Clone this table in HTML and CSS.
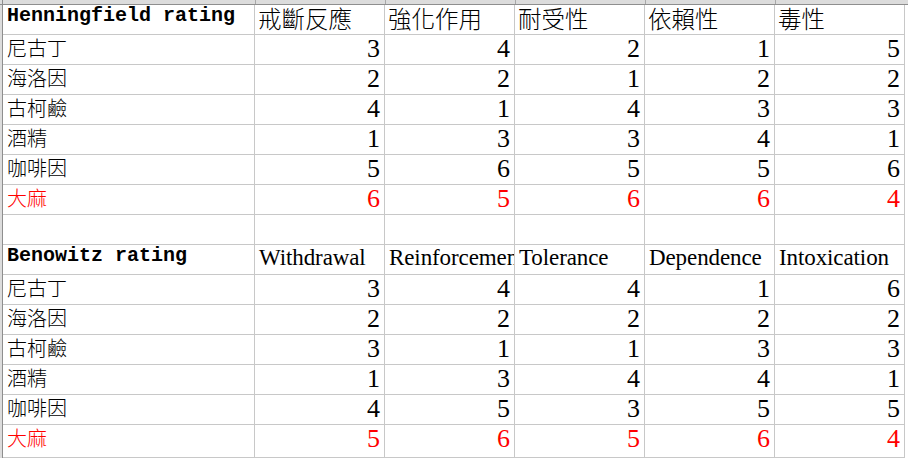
FILE: index.html
```html
<!DOCTYPE html>
<html lang="zh-Hant">
<head>
<meta charset="utf-8">
<title>Henningfield / Benowitz rating</title>
<link rel="stylesheet" href="styles.css">
</head>
<body>
<div class="sheet">
  <div class="colhead">
    <span class="ch c1"></span><span class="ch"></span><span class="ch"></span><span class="ch"></span><span class="ch"></span><span class="ch"></span><span class="ch last"></span>
  </div>
  <div class="body">
    <div class="rowhead"></div>
    <div class="grid">
      <div class="cell mono">Henningfield rating</div>
      <div class="cell hz">戒斷反應</div>
      <div class="cell hz">強化作用</div>
      <div class="cell hz">耐受性</div>
      <div class="cell hz">依賴性</div>
      <div class="cell hz">毒性</div>

      <div class="cell lbl">尼古丁</div>
      <div class="cell num">3</div><div class="cell num">4</div><div class="cell num">2</div><div class="cell num">1</div><div class="cell num">5</div>
      <div class="cell lbl">海洛因</div>
      <div class="cell num">2</div><div class="cell num">2</div><div class="cell num">1</div><div class="cell num">2</div><div class="cell num">2</div>
      <div class="cell lbl">古柯鹼</div>
      <div class="cell num">4</div><div class="cell num">1</div><div class="cell num">4</div><div class="cell num">3</div><div class="cell num">3</div>
      <div class="cell lbl">酒精</div>
      <div class="cell num">1</div><div class="cell num">3</div><div class="cell num">3</div><div class="cell num">4</div><div class="cell num">1</div>
      <div class="cell lbl">咖啡因</div>
      <div class="cell num">5</div><div class="cell num">6</div><div class="cell num">5</div><div class="cell num">5</div><div class="cell num">6</div>
      <div class="cell lbl red">大麻</div>
      <div class="cell num red">6</div><div class="cell num red">5</div><div class="cell num red">6</div><div class="cell num red">6</div><div class="cell num red">4</div>

      <div class="cell"></div><div class="cell"></div><div class="cell"></div><div class="cell"></div><div class="cell"></div><div class="cell"></div>

      <div class="cell mono">Benowitz rating</div>
      <div class="cell en">Withdrawal</div>
      <div class="cell en">Reinforcement</div>
      <div class="cell en">Tolerance</div>
      <div class="cell en">Dependence</div>
      <div class="cell en">Intoxication</div>

      <div class="cell lbl">尼古丁</div>
      <div class="cell num">3</div><div class="cell num">4</div><div class="cell num">4</div><div class="cell num">1</div><div class="cell num">6</div>
      <div class="cell lbl">海洛因</div>
      <div class="cell num">2</div><div class="cell num">2</div><div class="cell num">2</div><div class="cell num">2</div><div class="cell num">2</div>
      <div class="cell lbl">古柯鹼</div>
      <div class="cell num">3</div><div class="cell num">1</div><div class="cell num">1</div><div class="cell num">3</div><div class="cell num">3</div>
      <div class="cell lbl">酒精</div>
      <div class="cell num">1</div><div class="cell num">3</div><div class="cell num">4</div><div class="cell num">4</div><div class="cell num">1</div>
      <div class="cell lbl">咖啡因</div>
      <div class="cell num">4</div><div class="cell num">5</div><div class="cell num">3</div><div class="cell num">5</div><div class="cell num">5</div>
      <div class="cell lbl red">大麻</div>
      <div class="cell num red">5</div><div class="cell num red">6</div><div class="cell num red">5</div><div class="cell num red">6</div><div class="cell num red">4</div>
    </div>
  </div>
</div>
</body>
</html>
```

FILE: styles.css
```css
* { box-sizing: border-box; }

html, body {
  margin: 0;
  padding: 0;
  background: #ffffff;
}

body {
  width: 908px;
  height: 458px;
  overflow: hidden;
  color: #000000;
  font-family: "Liberation Serif", "Noto Sans CJK TC", serif;
}

.sheet {
  display: flex;
  flex-direction: column;
  height: 458px;
}

.colhead {
  display: grid;
  grid-template-columns: 3px 253px repeat(5, 130px) 1fr;
  height: 5px;
  flex: none;
  background: #dcdcdc;
  border-bottom: 1px solid #8e8e8e;
}

.colhead .ch {
  border-right: 1px solid #a8a8a8;
}

.colhead .ch:first-child {
  border-right: 1px solid #8e8e8e;
}

.colhead .ch.last {
  border-right: none;
}

.body {
  display: flex;
  flex: 1;
  min-height: 0;
}

.rowhead {
  width: 3px;
  flex: none;
  background: #dcdcdc;
  border-right: 1px solid #8e8e8e;
}

.grid {
  display: grid;
  grid-template-columns: 252px repeat(5, 130px);
  grid-template-rows: repeat(14, 30px) 1fr;
  align-content: start;
  height: 453px;
  background-image:
    linear-gradient(to right, transparent 251px, #c8c8c8 251px, #c8c8c8 252px, transparent 252px,
      transparent 381px, #c8c8c8 381px, #c8c8c8 382px, transparent 382px,
      transparent 511px, #c8c8c8 511px, #c8c8c8 512px, transparent 512px,
      transparent 641px, #c8c8c8 641px, #c8c8c8 642px, transparent 642px,
      transparent 771px, #c8c8c8 771px, #c8c8c8 772px, transparent 772px,
      transparent 901px, #c8c8c8 901px, #c8c8c8 902px, transparent 902px);
}

.cell {
  border-right: 1px solid #c8c8c8;
  border-bottom: 1px solid #c8c8c8;
  overflow-x: clip;
  overflow-y: visible;
  white-space: nowrap;
  padding: 0 4px;
  background: #ffffff;
}

.mono {
  font-family: "Liberation Mono", monospace;
  font-weight: 700;
  font-size: 20px;
  line-height: 22px;
  padding-left: 4px;
}

.hz {
  font-family: "Noto Sans CJK TC", sans-serif;
  font-weight: 300;
  font-size: 23.5px;
  line-height: 26px;
  padding-left: 3px;
}

.en {
  font-family: "Liberation Serif", serif;
  font-size: 23px;
  line-height: 26.5px;
  padding-left: 4px;
  letter-spacing: -0.1px;
}

.lbl {
  font-family: "Noto Sans CJK TC", sans-serif;
  font-weight: 300;
  font-size: 20px;
  line-height: 25px;
  padding-left: 4px;
}

.num {
  font-family: "Liberation Serif", serif;
  font-size: 26px;
  line-height: 27px;
  text-align: right;
  padding-right: 4px;
}

.red {
  color: #ff0000;
}
```
